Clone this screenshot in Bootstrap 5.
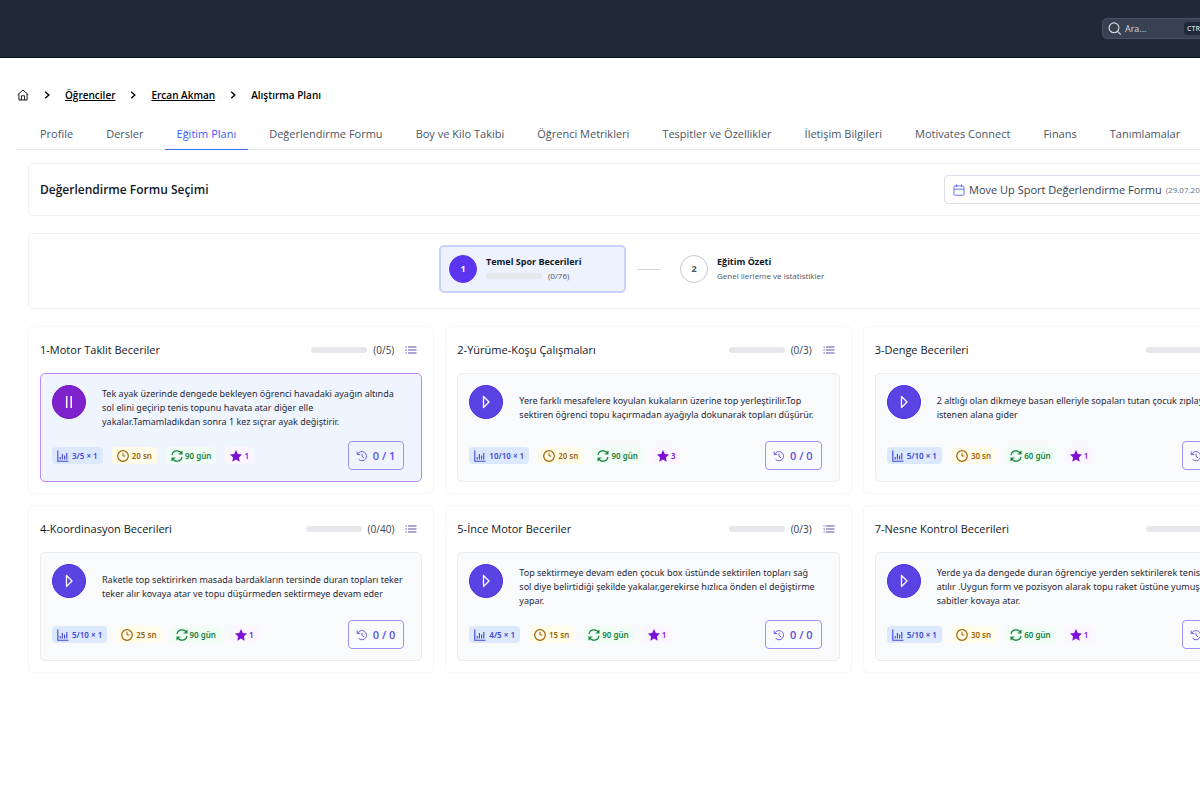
<!DOCTYPE html>
<html lang="tr">
<head>
<meta charset="utf-8">
<meta name="viewport" content="width=device-width, initial-scale=1">
<title>Alıştırma Planı</title>
<link href="https://cdn.jsdelivr.net/npm/bootstrap@5.3.0/dist/css/bootstrap.min.css" rel="stylesheet">
<style>
body{font-family:"Open Sans","Noto Sans",sans-serif;font-size:11px;line-height:16px;color:#1f2937;background:#fff;overflow-x:hidden}
svg{display:block;flex:none}
.shell{width:calc(100% + 97px)}
.topbar{background:#212936;height:58px;border-bottom:1px solid #0b0f19;padding-right:77px}
.searchbox{background:#374151;border:1px solid #465164;border-radius:5px;width:118px;height:21px;color:#d1d5db;padding:0 6px 0 5px;gap:3px}
.searchbox input{background:none;border:0;outline:0;padding:0;color:#d1d5db;font-size:9px;min-width:0;flex:1}
.searchbox input::placeholder{color:#d1d5db;opacity:1}
.searchbox kbd{background:#1f2937;color:#d1d5db;font:600 7px/13px "Open Sans",sans-serif;border-radius:3px;padding:0 3px;white-space:nowrap}
.page{padding:28px 17px 24px}
.crumbs{gap:14px;height:18px;font-size:10px;font-weight:600;color:#000}
.crumbs a{color:#000}
.tabs{margin-top:16px;border-bottom:1px solid #e5e7eb;padding-left:11px;gap:9px}
.tabs .nav-link{padding:6px 12px 7px;font-weight:500;color:#4b5563;border-bottom:1px solid transparent;margin-bottom:-1px;white-space:nowrap}
.tabs .nav-link.active{color:#3b5bf6;border-color:#3b6ef6}
.content{padding:13px 11px 0;gap:17px}
.panel{border:1px solid #f1f2f4;border-radius:5px;background:#fff;padding:11px}
.panel.steps{padding:11px 11px 15px}
.panel h1{font-size:12px;line-height:16px;font-weight:600;color:#111827}
.form-pick{border:1px solid #dbe0ea;border-radius:4px;background:#fff;width:313px;height:29px;padding:0 8px;gap:4px;color:#374151;white-space:nowrap}
.form-pick small{font-size:8px;color:#6b7280}
.form-pick svg{color:#6474f5}
.step-row{gap:11px}
.step{width:187px;height:48px;border:1px solid transparent;border-radius:5px;background:none;padding:0 8px;gap:9px;text-align:left;color:#111827}
.step.on{background:#eef2ff;border:2px solid #c7d2fe}
.step b{display:block;font-size:9px;line-height:14px;font-weight:700}
.step .num{width:28px;height:28px;border-radius:50%;border:1px solid #c3c8d1;font-size:9px;font-weight:700;color:#4b5563;flex:none}
.step.on .num{background:#5b34f0;border-color:#5b34f0;color:#fff}
.step .sub{font-size:8px;line-height:14px;color:#4b5563;gap:6px;white-space:nowrap}
.join{width:23px;height:1px;background:#d1d5db}
.meter{width:56px;height:6px;border-radius:3px;background:#e5e7eb;overflow:hidden;flex:none}
.meter i{display:block;height:100%;background:#5b34f0}
.skills{display:grid;grid-template-columns:repeat(3,1fr);gap:11px}
.skill{border:1px solid #f7f7f9;border-radius:5px;padding:11px}
.skill header{height:24px;margin-bottom:11px;padding-right:5px}
.skill h2{font-size:11px;line-height:16px;font-weight:500;margin:0;color:#111827}
.count{font-size:10px;font-weight:500;color:#374151;margin:0 11px 0 6px}
.menu-btn{border:0;background:none;padding:0;color:#5a4fb5}
.task{background:#f9fafc;border:1px solid #eaecf0;border-radius:5px;padding:11px}
.task.live{background:#eff5ff;border-color:#c084fc}
.play{width:34px;height:34px;border-radius:50%;border:1px solid #4a2fe0;background:#5a43e2;color:#fff;padding:0;flex:none}
.live .play{background:#7e22ce;border-color:#7417c2}
.what{font-family:"Noto Sans",sans-serif;font-size:9px;line-height:14px;min-height:46px;margin:0 3px 0 16px;color:#1f2937;white-space:nowrap}
.foot{margin-top:10px;gap:9px;padding-right:6px}
.tag{height:17px;border-radius:4px;padding:0 5px;gap:2px;font:600 8px/17px "Noto Sans",sans-serif;white-space:nowrap}
.t-rep{background:#dbe8fe;color:#4346d6}
.t-time{background:#fefce8;color:#a16207}
.t-day{background:#f0fdf4;color:#15803d}
.t-star{background:#faf5ff;color:#7e10d6}
.t-rep,.t-time{gap:3px}
.hist{height:29px;border:1px solid #9a93f3;border-radius:4px;background:transparent;color:#5b50e0;font-size:11px;font-weight:600;padding:0 8px 0 7px;gap:5px;white-space:nowrap}
</style>
</head>
<body>
<svg width="0" height="0" class="position-absolute" aria-hidden="true">
<defs>
<symbol id="play" viewBox="0 0 16 16"><path d="M5.5 2.5v11L11 8z" fill="none" stroke="currentColor" stroke-width="1.3" stroke-linejoin="round"/></symbol>
<symbol id="pause" viewBox="0 0 16 16"><path d="M5.7 2v12M10.2 2v12" stroke="currentColor" stroke-width="1.5"/></symbol>
<symbol id="chart" viewBox="0 0 12 12"><path d="M.8.5v10.7h10.7M3.2 9.5V7M5.4 9.5V4M7.6 9.5V5.5M9.8 9.5V3" fill="none" stroke="currentColor" stroke-width="1.1"/></symbol>
<symbol id="clock" viewBox="0 0 12 12"><g fill="none" stroke="currentColor"><circle cx="6" cy="6" r="5.3" stroke-width="1.2"/><path d="M6 2.8V6h2.4"/></g></symbol>
<symbol id="cycle" viewBox="0 0 12 12"><path d="M1 5.2A5 5 0 0 1 10.4 3.6M11 6.8A5 5 0 0 1 1.6 8.4M10.9.8v3.2H7.6M1.1 11.2V8h3.3" fill="none" stroke="currentColor" stroke-width="1.2"/></symbol>
<symbol id="star" viewBox="0 0 12 12"><path d="M6 .1 7.8 4l4.2.5-3.1 2.9.8 4.3L6 9.6l-3.7 2.1.8-4.3L0 4.5 4.2 4z" fill="currentColor"/></symbol>
<symbol id="history" viewBox="0 0 12 12"><path d="M1.7 4.4A4.6 4.6 0 1 1 2.6 9.3M1.2 1.6v3h3M6 3.8v2.5l2 1.6" fill="none" stroke="currentColor" stroke-width=".9"/></symbol>
<symbol id="list" viewBox="0 0 12 10"><path d="M3 2h8.5M3 5h8.5M3 8h8.5M.5 2h1.3M.5 5h1.3M.5 8h1.3" stroke="currentColor" stroke-width="1.2"/></symbol>
<symbol id="chev" viewBox="0 0 8 10"><path d="M2.2 1.8 5.8 5 2.2 8.2" fill="none" stroke="currentColor" stroke-width="1.4"/></symbol>
</defs></svg>

<div class="shell">
<div class="topbar d-flex align-items-center justify-content-end">
  <label class="searchbox d-flex align-items-center">
    <svg width="14" height="14" viewBox="0 0 14 14" fill="none" stroke="currentColor" stroke-width="1.2"><circle cx="6" cy="5.8" r="4.9"/><path d="m9.6 9.4 3.2 3.2"/></svg>
    <input type="search" placeholder="Ara..." aria-label="Ara"><kbd>CTRL K</kbd>
  </label>
</div>

<main class="page">
<nav class="crumbs d-flex align-items-center" aria-label="Konum">
  <a href="#" aria-label="Ana sayfa"><svg width="12" height="12" viewBox="0 0 12 12" fill="none" stroke="currentColor" stroke-width=".9"><path d="M.6 5.8 6 1l5.4 4.8M1.9 5v6h8.2V5M4.4 11V6.8h3.2V11"/></svg></a>
  <svg width="8" height="10"><use href="#chev"/></svg>
  <a href="#">Öğrenciler</a>
  <svg width="8" height="10"><use href="#chev"/></svg>
  <a href="#">Ercan Akman</a>
  <svg width="8" height="10"><use href="#chev"/></svg>
  <span>Alıştırma Planı</span>
</nav>

<nav class="tabs nav flex-nowrap">
  <a class="nav-link" href="#">Profile</a>
  <a class="nav-link" href="#">Dersler</a>
  <a class="nav-link active" href="#" aria-current="page">Eğitim Planı</a>
  <a class="nav-link" href="#">Değerlendirme Formu</a>
  <a class="nav-link" href="#">Boy ve Kilo Takibi</a>
  <a class="nav-link" href="#">Öğrenci Metrikleri</a>
  <a class="nav-link" href="#">Tespitler ve Özellikler</a>
  <a class="nav-link" href="#">İletişim Bilgileri</a>
  <a class="nav-link" href="#">Motivates Connect</a>
  <a class="nav-link" href="#">Finans</a>
  <a class="nav-link" href="#">Tanımlamalar</a>
</nav>

<div class="content d-flex flex-column">
<section class="panel d-flex align-items-center justify-content-between">
  <h1 class="m-0">Değerlendirme Formu Seçimi</h1>
  <button type="button" class="form-pick d-flex align-items-center" aria-haspopup="listbox">
    <svg width="12" height="12" viewBox="0 0 12 12" fill="none" stroke="currentColor"><rect x="1" y="1.9" width="10" height="9.4" rx="1.2"/><path d="M1 5.2h10M3.5.3v2.8M8.5.3v2.8"/></svg>
    <span>Move Up Sport Değerlendirme Formu</span><small>(29.07.2025)</small>
  </button>
</section>

<section class="panel steps d-flex align-items-center justify-content-center">
  <div class="step-row d-flex align-items-center">
    <button type="button" class="step on d-flex align-items-center">
      <span class="num d-flex align-items-center justify-content-center">1</span>
      <span><b>Temel Spor Becerileri</b><span class="sub d-flex align-items-center"><span class="meter"><i style="width:0%"></i></span>(0/76)</span></span>
    </button>
    <span class="join"></span>
    <button type="button" class="step d-flex align-items-center">
      <span class="num d-flex align-items-center justify-content-center">2</span>
      <span><b>Eğitim Özeti</b><span class="sub d-flex">Genel ilerleme ve istatistikler</span></span>
    </button>
  </div>
</section>

<section class="skills">
  <article class="skill">
    <header class="d-flex align-items-center"><h2 class="me-auto">1-Motor Taklit Beceriler</h2><span class="meter"><i style="width:0%"></i></span><span class="count">(0/5)</span><button type="button" class="menu-btn" aria-label="Liste"><svg width="12" height="10"><use href="#list"/></svg></button></header>
    <div class="task live">
      <div class="d-flex"><button type="button" class="play d-flex align-items-center justify-content-center" aria-label="Duraklat"><svg width="16" height="16"><use href="#pause"/></svg></button>
      <div class="what d-flex align-items-center"><span>Tek ayak üzerinde dengede bekleyen öğrenci havadaki ayağın altında<br>sol elini geçirip tenis topunu havata atar diğer elle<br>yakalar.Tamamladıkdan sonra 1 kez sıçrar ayak değiştirir.</span></div></div>
      <div class="foot d-flex align-items-center">
        <span class="tag t-rep d-flex align-items-center"><svg width="12" height="12"><use href="#chart"/></svg>3/5 × 1</span>
        <span class="tag t-time d-flex align-items-center"><svg width="12" height="12"><use href="#clock"/></svg>20 sn</span>
        <span class="tag t-day d-flex align-items-center"><svg width="12" height="12"><use href="#cycle"/></svg>90 gün</span>
        <span class="tag t-star d-flex align-items-center"><svg width="12" height="12"><use href="#star"/></svg>1</span>
        <button type="button" class="hist d-flex align-items-center ms-auto"><svg width="12" height="12"><use href="#history"/></svg>0 / 1</button>
      </div>
    </div>
  </article>

  <article class="skill">
    <header class="d-flex align-items-center"><h2 class="me-auto">2-Yürüme-Koşu Çalışmaları</h2><span class="meter"><i style="width:0%"></i></span><span class="count">(0/3)</span><button type="button" class="menu-btn" aria-label="Liste"><svg width="12" height="10"><use href="#list"/></svg></button></header>
    <div class="task">
      <div class="d-flex"><button type="button" class="play d-flex align-items-center justify-content-center" aria-label="Oynat"><svg width="16" height="16"><use href="#play"/></svg></button>
      <div class="what d-flex align-items-center"><span>Yere farklı mesafelere koyulan kukaların üzerine top yerleştirilir.Top<br>sektiren öğrenci topu kaçırmadan ayağıyla dokunarak topları düşürür.</span></div></div>
      <div class="foot d-flex align-items-center">
        <span class="tag t-rep d-flex align-items-center"><svg width="12" height="12"><use href="#chart"/></svg>10/10 × 1</span>
        <span class="tag t-time d-flex align-items-center"><svg width="12" height="12"><use href="#clock"/></svg>20 sn</span>
        <span class="tag t-day d-flex align-items-center"><svg width="12" height="12"><use href="#cycle"/></svg>90 gün</span>
        <span class="tag t-star d-flex align-items-center"><svg width="12" height="12"><use href="#star"/></svg>3</span>
        <button type="button" class="hist d-flex align-items-center ms-auto"><svg width="12" height="12"><use href="#history"/></svg>0 / 0</button>
      </div>
    </div>
  </article>

  <article class="skill">
    <header class="d-flex align-items-center"><h2 class="me-auto">3-Denge Becerileri</h2><span class="meter"><i style="width:0%"></i></span><span class="count">(0/7)</span><button type="button" class="menu-btn" aria-label="Liste"><svg width="12" height="10"><use href="#list"/></svg></button></header>
    <div class="task">
      <div class="d-flex"><button type="button" class="play d-flex align-items-center justify-content-center" aria-label="Oynat"><svg width="16" height="16"><use href="#play"/></svg></button>
      <div class="what d-flex align-items-center"><span>2 altlığı olan dikmeye basan elleriyle sopaları tutan çocuk zıplayarak<br>istenen alana gider</span></div></div>
      <div class="foot d-flex align-items-center">
        <span class="tag t-rep d-flex align-items-center"><svg width="12" height="12"><use href="#chart"/></svg>5/10 × 1</span>
        <span class="tag t-time d-flex align-items-center"><svg width="12" height="12"><use href="#clock"/></svg>30 sn</span>
        <span class="tag t-day d-flex align-items-center"><svg width="12" height="12"><use href="#cycle"/></svg>60 gün</span>
        <span class="tag t-star d-flex align-items-center"><svg width="12" height="12"><use href="#star"/></svg>1</span>
        <button type="button" class="hist d-flex align-items-center ms-auto"><svg width="12" height="12"><use href="#history"/></svg>0 / 0</button>
      </div>
    </div>
  </article>

  <article class="skill">
    <header class="d-flex align-items-center"><h2 class="me-auto">4-Koordinasyon Becerileri</h2><span class="meter"><i style="width:0%"></i></span><span class="count">(0/40)</span><button type="button" class="menu-btn" aria-label="Liste"><svg width="12" height="10"><use href="#list"/></svg></button></header>
    <div class="task">
      <div class="d-flex"><button type="button" class="play d-flex align-items-center justify-content-center" aria-label="Oynat"><svg width="16" height="16"><use href="#play"/></svg></button>
      <div class="what d-flex align-items-center"><span>Raketle top sektirirken masada bardakların tersinde duran topları teker<br>teker alır kovaya atar ve topu düşürmeden sektirmeye devam eder</span></div></div>
      <div class="foot d-flex align-items-center">
        <span class="tag t-rep d-flex align-items-center"><svg width="12" height="12"><use href="#chart"/></svg>5/10 × 1</span>
        <span class="tag t-time d-flex align-items-center"><svg width="12" height="12"><use href="#clock"/></svg>25 sn</span>
        <span class="tag t-day d-flex align-items-center"><svg width="12" height="12"><use href="#cycle"/></svg>90 gün</span>
        <span class="tag t-star d-flex align-items-center"><svg width="12" height="12"><use href="#star"/></svg>1</span>
        <button type="button" class="hist d-flex align-items-center ms-auto"><svg width="12" height="12"><use href="#history"/></svg>0 / 0</button>
      </div>
    </div>
  </article>

  <article class="skill">
    <header class="d-flex align-items-center"><h2 class="me-auto">5-İnce Motor Beceriler</h2><span class="meter"><i style="width:0%"></i></span><span class="count">(0/3)</span><button type="button" class="menu-btn" aria-label="Liste"><svg width="12" height="10"><use href="#list"/></svg></button></header>
    <div class="task">
      <div class="d-flex"><button type="button" class="play d-flex align-items-center justify-content-center" aria-label="Oynat"><svg width="16" height="16"><use href="#play"/></svg></button>
      <div class="what d-flex align-items-center"><span>Top sektirmeye devam eden çocuk box üstünde sektirilen topları sağ<br>sol diye belirtidiği şekilde yakalar,gerekirse hızlıca önden el değiştirme<br>yapar.</span></div></div>
      <div class="foot d-flex align-items-center">
        <span class="tag t-rep d-flex align-items-center"><svg width="12" height="12"><use href="#chart"/></svg>4/5 × 1</span>
        <span class="tag t-time d-flex align-items-center"><svg width="12" height="12"><use href="#clock"/></svg>15 sn</span>
        <span class="tag t-day d-flex align-items-center"><svg width="12" height="12"><use href="#cycle"/></svg>90 gün</span>
        <span class="tag t-star d-flex align-items-center"><svg width="12" height="12"><use href="#star"/></svg>1</span>
        <button type="button" class="hist d-flex align-items-center ms-auto"><svg width="12" height="12"><use href="#history"/></svg>0 / 0</button>
      </div>
    </div>
  </article>

  <article class="skill">
    <header class="d-flex align-items-center"><h2 class="me-auto">7-Nesne Kontrol Becerileri</h2><span class="meter"><i style="width:0%"></i></span><span class="count">(0/5)</span><button type="button" class="menu-btn" aria-label="Liste"><svg width="12" height="10"><use href="#list"/></svg></button></header>
    <div class="task">
      <div class="d-flex"><button type="button" class="play d-flex align-items-center justify-content-center" aria-label="Oynat"><svg width="16" height="16"><use href="#play"/></svg></button>
      <div class="what d-flex align-items-center"><span>Yerde ya da dengede duran öğrenciye yerden sektirilerek tenis topu<br>atılır .Uygun form ve pozisyon alarak topu raket üstüne yumuşak<br>sabitler kovaya atar.</span></div></div>
      <div class="foot d-flex align-items-center">
        <span class="tag t-rep d-flex align-items-center"><svg width="12" height="12"><use href="#chart"/></svg>5/10 × 1</span>
        <span class="tag t-time d-flex align-items-center"><svg width="12" height="12"><use href="#clock"/></svg>30 sn</span>
        <span class="tag t-day d-flex align-items-center"><svg width="12" height="12"><use href="#cycle"/></svg>60 gün</span>
        <span class="tag t-star d-flex align-items-center"><svg width="12" height="12"><use href="#star"/></svg>1</span>
        <button type="button" class="hist d-flex align-items-center ms-auto"><svg width="12" height="12"><use href="#history"/></svg>0 / 0</button>
      </div>
    </div>
  </article>
</section>
</div>
</main>
</div>
<script src="https://cdn.jsdelivr.net/npm/bootstrap@5.3.0/dist/js/bootstrap.bundle.min.js"></script>
</body>
</html>
